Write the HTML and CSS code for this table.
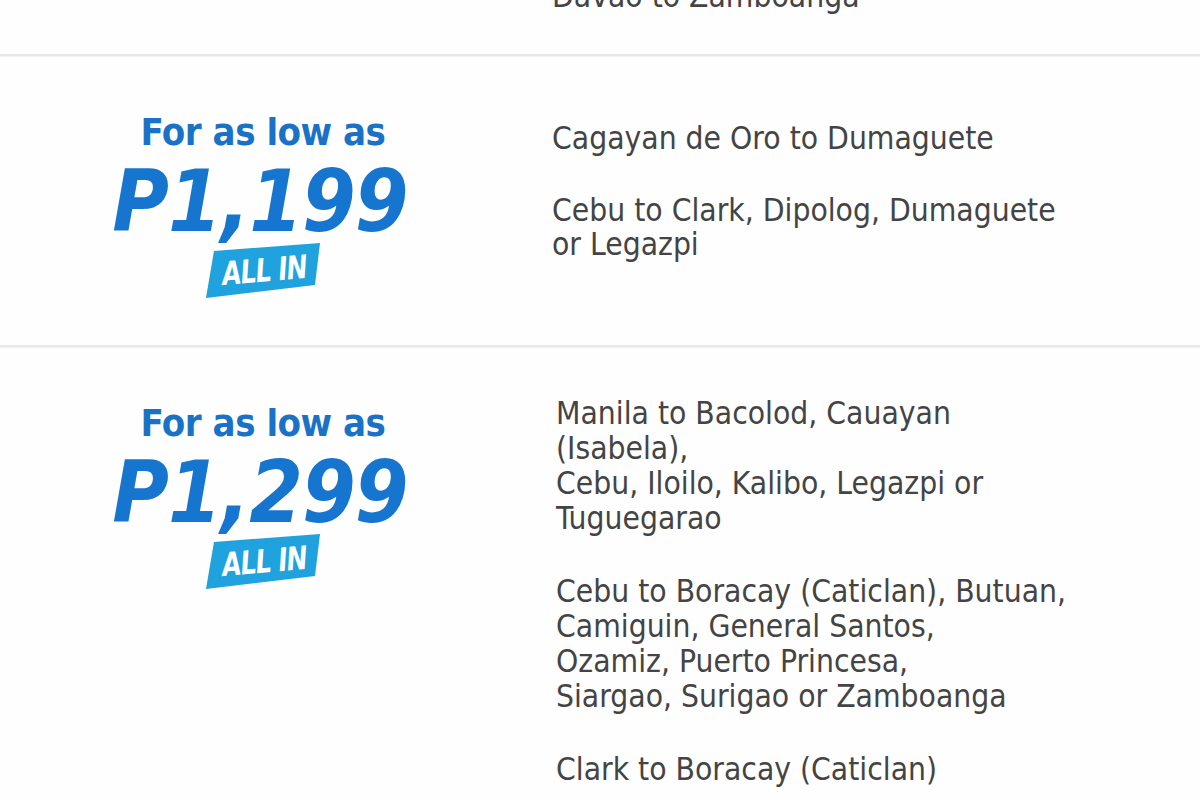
FILE: index.html
```html
<!DOCTYPE html>
<html lang="en">
<head>
<meta charset="utf-8">
<title>Seat sale routes</title>
<link rel="stylesheet" href="styles.css">
</head>
<body>
<main class="fares">
  <section class="fare fare--cut">
    <div class="fare__left"></div>
    <div class="fare__routes">
      <p class="route">Davao to Zamboanga</p>
    </div>
  </section>

  <section class="fare fare--mid">
    <div class="fare__left">
      <div class="promo">
        <div class="promo__lead">For as low as</div>
        <div class="promo__price">P1,199</div>
        <div class="promo__badge"><span>ALL IN</span></div>
      </div>
    </div>
    <div class="fare__routes">
      <p class="route">Cagayan de Oro to Dumaguete</p>
      <p class="route">Cebu to Clark, Dipolog, Dumaguete<br>or Legazpi</p>
    </div>
  </section>

  <section class="fare fare--low">
    <div class="fare__left">
      <div class="promo">
        <div class="promo__lead">For as low as</div>
        <div class="promo__price">P1,299</div>
        <div class="promo__badge"><span>ALL IN</span></div>
      </div>
    </div>
    <div class="fare__routes">
      <p class="route">Manila to Bacolod, Cauayan<br>(Isabela),<br>Cebu, Iloilo, Kalibo, Legazpi or<br>Tuguegarao</p>
      <p class="route">Cebu to Boracay (Caticlan), Butuan,<br>Camiguin, General Santos,<br>Ozamiz, Puerto Princesa,<br>Siargao, Surigao or Zamboanga</p>
      <p class="route">Clark to Boracay (Caticlan)</p>
    </div>
  </section>
</main>
</body>
</html>
```

FILE: styles.css
```css
html, body {
  margin: 0;
  padding: 0;
  background: #fefefe;
  overflow: hidden;
}

.fares {
  width: 1200px;
}

.fare {
  display: grid;
  grid-template-columns: 552px 1fr;
  border-bottom: 2px solid #e7e7e7;
  box-shadow: 0 1px 1px #f2f2f2;
}

.fare--cut {
  margin-top: -21px;
  height: 75px;
}

.fare--mid {
  height: 289px;
}

.fare--low {
  height: 460px;
  border-bottom: none;
  box-shadow: none;
}

.fare__left {
  display: flex;
  justify-content: center;
  padding-right: 26px;
}

.fare--mid .fare__left { padding-top: 57px; }
.fare--low .fare__left { padding-top: 57px; }

.fare__routes {
  font-family: "DejaVu Sans Condensed", "DejaVu Sans", sans-serif;
  font-stretch: condensed;
  font-size: 31.5px;
  line-height: 34px;
  color: #444444;
}

.fare--mid .fare__routes { padding-top: 65px; }
.fare--low .fare__routes { padding-top: 49px; padding-left: 4px; line-height: 35px; }

.route {
  margin: 0 0 38px;
}

.promo {
  display: flex;
  flex-direction: column;
  align-items: center;
  font-family: "DejaVu Sans Condensed", "DejaVu Sans", sans-serif;
  font-stretch: condensed;
  font-weight: bold;
  color: #1a72c6;
}

.promo__lead {
  font-size: 38px;
  line-height: 38px;
  letter-spacing: -0.5px;
}

.promo__price {
  margin-top: 15px;
  font-size: 86px;
  line-height: 70px;
  font-style: italic;
  letter-spacing: -1px;
  color: #1675cf;
  margin-right: 6px;
}

.promo__badge {
  margin-top: 7px;
  margin-left: 0;
  width: 114px;
  height: 55px;
  background: #1fa2dd;
  clip-path: polygon(8px 8px, 114px 0, 109px 42px, 0 55px);
  display: flex;
  align-items: center;
  justify-content: center;
}

.promo__badge span {
  display: block;
  color: #ffffff;
  font-size: 28px;
  font-style: italic;
  letter-spacing: -1px;
  transform: rotate(-5deg) scaleY(1.15);
  margin-left: 2px;
}
```
